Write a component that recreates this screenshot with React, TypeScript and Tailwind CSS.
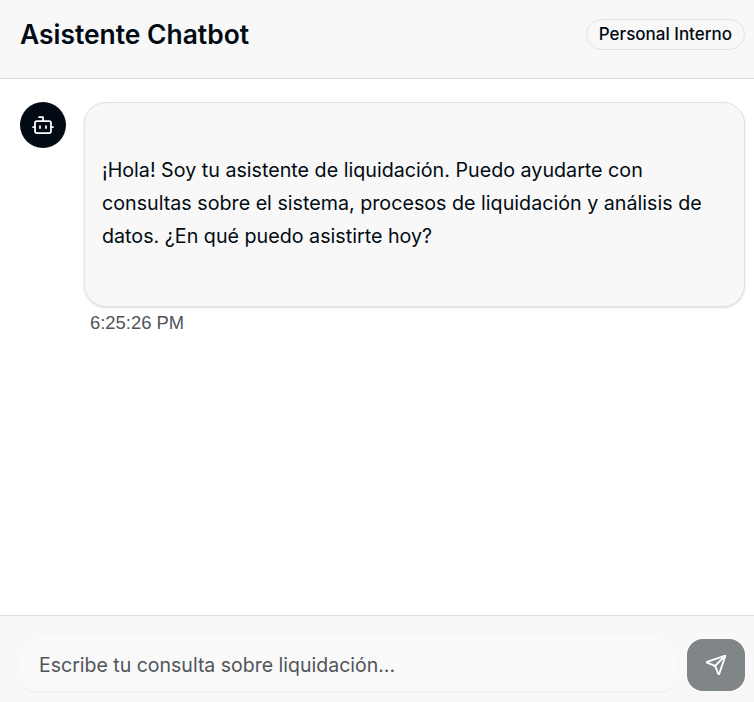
import { Bot, Send } from "lucide-react";

const FONT = "font-['Inter','Liberation_Sans',sans-serif]";

export default function App() {
  return (
    <div className={`flex h-[702px] w-[754px] flex-col overflow-hidden bg-white text-[#020b13] ${FONT}`}>
      {/* Header */}
      <header className="flex h-[79px] items-start justify-between border-b border-[#e0e0e0] bg-[#f8f8f8] pt-[19px] pl-5 pr-[9px]">
        <h1 className="text-[26.4px] leading-[30px] font-semibold">Asistente Chatbot</h1>
        <span className="rounded-full border border-[#e2e2e2] px-3 text-[17px] leading-[29px] font-medium">
          Personal Interno
        </span>
      </header>

      {/* Messages */}
      <main className="flex flex-1 gap-[18px] pt-[23px] pl-5 pr-[9px]">
        <div className="flex h-[46px] w-[46px] shrink-0 items-center justify-center rounded-full bg-[#020b13] text-white">
          <Bot size={24} strokeWidth={1.75} />
        </div>
        <div className="flex-1">
          <div className="rounded-[22px] border border-[#e2e2e2] bg-[#f8f8f8] px-[17px] pt-[51px] pb-[53px] shadow-sm">
            <p className="text-[19.7px] leading-[33px]">
              ¡Hola! Soy tu asistente de liquidación. Puedo ayudarte con consultas sobre el sistema, procesos de
              liquidación y análisis de datos. ¿En qué puedo asistirte hoy?
            </p>
          </div>
          <p className="mt-1 pl-[6px] font-['Liberation_Sans',sans-serif] text-[18.4px] leading-6 text-[#4f5559]">
            6:25:26 PM
          </p>
        </div>
      </main>

      {/* Input */}
      <footer className="flex h-[87px] items-start gap-[11px] border-t border-[#e0e0e0] bg-[#f8f8f8] pt-[23px] pl-5 pr-[9px]">
        <div className="flex h-[52px] flex-1 items-center rounded-2xl border border-[#fdfdfd] bg-[#f9f9f9] px-[18px] pt-[2px] shadow-xs">
          <span className="text-[19.5px] text-[#4f5559]">Escribe tu consulta sobre liquidación...</span>
        </div>
        <button className="flex h-[52px] w-[58px] items-center justify-center rounded-2xl bg-[#808587] text-white">
          <Send size={22} strokeWidth={2} />
        </button>
      </footer>
    </div>
  );
}
